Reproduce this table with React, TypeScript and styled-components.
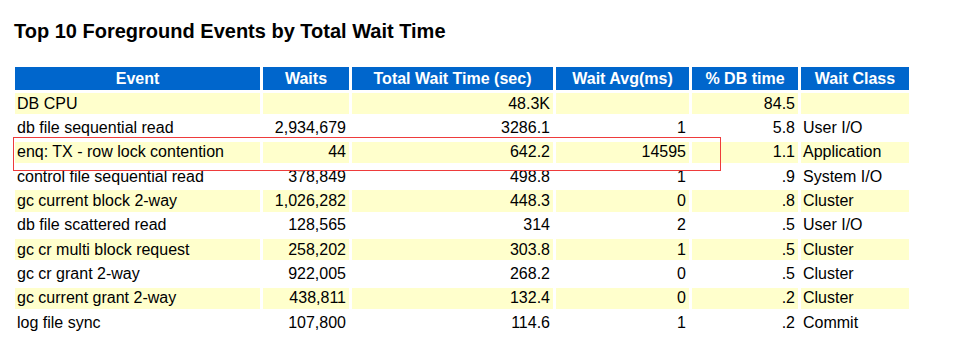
import styled, { createGlobalStyle } from "styled-components"

type Linha = { evento: string; waits: string; total: string; media: string; pct: string; classe: string }

const EVENTOS: Linha[] = [
  { evento: "DB CPU", waits: "", total: "48.3K", media: "", pct: "84.5", classe: "" },
  { evento: "db file sequential read", waits: "2,934,679", total: "3286.1", media: "1", pct: "5.8", classe: "User I/O" },
  { evento: "enq: TX - row lock contention", waits: "44", total: "642.2", media: "14595", pct: "1.1", classe: "Application" },
  { evento: "control file sequential read", waits: "378,849", total: "498.8", media: "1", pct: ".9", classe: "System I/O" },
  { evento: "gc current block 2-way", waits: "1,026,282", total: "448.3", media: "0", pct: ".8", classe: "Cluster" },
  { evento: "db file scattered read", waits: "128,565", total: "314", media: "2", pct: ".5", classe: "User I/O" },
  { evento: "gc cr multi block request", waits: "258,202", total: "303.8", media: "1", pct: ".5", classe: "Cluster" },
  { evento: "gc cr grant 2-way", waits: "922,005", total: "268.2", media: "0", pct: ".5", classe: "Cluster" },
  { evento: "gc current grant 2-way", waits: "438,811", total: "132.4", media: "0", pct: ".2", classe: "Cluster" },
  { evento: "log file sync", waits: "107,800", total: "114.6", media: "1", pct: ".2", classe: "Commit" },
]

const Global = createGlobalStyle`
  body { margin: 0; background: #fff; font-family: "Liberation Sans", Arial, sans-serif; }
`

const Page    = styled.div`position: relative; width: 961px; height: 355px; padding: 20px 0 0 12px; box-sizing: border-box;`
const Title   = styled.h2`font-size: 20px; font-weight: 700; color: #000; margin: 0 0 21px 2px; line-height: 23px;`
const Table   = styled.table`border-collapse: separate; border-spacing: 3px; table-layout: fixed;`
const Th      = styled.th<{ $w: number }>`
  width: ${p => p.$w}px; height: 23px; padding: 0; background: #0066cc; color: #fff;
  font-size: 16px; font-weight: 700; text-align: center;
`
const Td      = styled.td<{ $num?: boolean; $par: boolean }>`
  height: 21.33px; padding: 0 ${p => (p.$num ? "3px" : "0")} 0 ${p => (p.$num ? "0" : "2px")};
  font-size: 16px; color: #000; line-height: 18px; white-space: nowrap;
  text-align: ${p => (p.$num ? "right" : "left")};
  background: ${p => (p.$par ? "#ffffcc" : "transparent")};
`
const Destaque = styled.div`
  position: absolute; left: 13px; top: 137px; width: 708px; height: 34px;
  border: 1px solid #ee3b3b; box-sizing: border-box; pointer-events: none;
`

export default function App() {
  return (
    <Page>
      <Global />
      <Title>Top 10 Foreground Events by Total Wait Time</Title>
      <Table>
        <thead>
          <tr>
            <Th $w={245}>Event</Th>
            <Th $w={86}>Waits</Th>
            <Th $w={201}>Total Wait Time (sec)</Th>
            <Th $w={133}>Wait Avg(ms)</Th>
            <Th $w={106}>% DB time</Th>
            <Th $w={108}>Wait Class</Th>
          </tr>
        </thead>
        <tbody>
          {EVENTOS.map((l, i) => {
            const par = i % 2 === 0
            return (
              <tr key={l.evento}>
                <Td $par={par}>{l.evento}</Td>
                <Td $par={par} $num>{l.waits}</Td>
                <Td $par={par} $num>{l.total}</Td>
                <Td $par={par} $num>{l.media}</Td>
                <Td $par={par} $num>{l.pct}</Td>
                <Td $par={par}>{l.classe}</Td>
              </tr>
            )
          })}
        </tbody>
      </Table>
      <Destaque />
    </Page>
  )
}
